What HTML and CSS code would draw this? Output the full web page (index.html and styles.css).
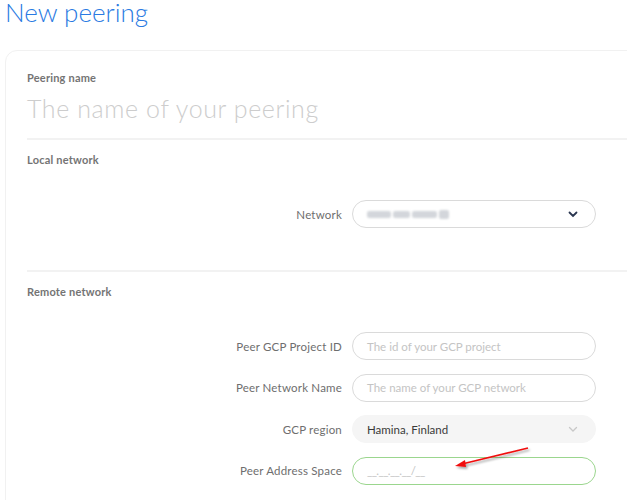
FILE: index.html
```html
<!DOCTYPE html>
<html>
<head>
<meta charset="utf-8">
<link rel="stylesheet" href="styles.css">
</head>
<body>
<h1 class="title">New peering</h1>
<div class="card">
  <section class="block block-name">
    <div class="section-label">Peering name</div>
    <div class="big-input">The name of your peering</div>
  </section>
  <div class="sep"></div>
  <section class="block block-local">
    <div class="section-label">Local network</div>
    <div class="row row-network">
      <label class="row-label">Network</label>
      <div class="field select">
        <span class="blurred"><i></i><i></i><i></i><i></i></span>
        <svg class="chev dark" width="10" height="7" viewBox="0 0 10 7"><path d="M1.5 1.5 L5 5 L8.5 1.5" fill="none" stroke="#2a3650" stroke-width="1.8" stroke-linecap="round"/></svg>
      </div>
    </div>
  </section>
  <div class="sep"></div>
  <section class="block block-remote">
    <div class="section-label">Remote network</div>
    <div class="rows">
      <div class="row">
        <label class="row-label">Peer GCP Project ID</label>
        <div class="field"><span class="ph">The id of your GCP project</span></div>
      </div>
      <div class="row">
        <label class="row-label">Peer Network Name</label>
        <div class="field"><span class="ph">The name of your GCP network</span></div>
      </div>
      <div class="row">
        <label class="row-label">GCP region</label>
        <div class="field filled">
          <span class="val">Hamina, Finland</span>
          <svg class="chev" width="10" height="7" viewBox="0 0 10 7"><path d="M1.5 1.5 L5 5 L8.5 1.5" fill="none" stroke="#c8c8c8" stroke-width="1.3" stroke-linecap="round"/></svg>
        </div>
      </div>
      <div class="row">
        <label class="row-label">Peer Address Space</label>
        <div class="field focus"><span class="ph mask">__.__.__.__/__</span></div>
      </div>
    </div>
  </section>
</div>
<svg class="arrow" width="90" height="40" viewBox="0 0 90 40">
  <defs>
    <filter id="sh" x="-20%" y="-50%" width="140%" height="200%">
      <feDropShadow dx="1.5" dy="2" stdDeviation="1" flood-color="#000" flood-opacity="0.35"/>
    </filter>
  </defs>
  <g filter="url(#sh)">
    <path d="M78 5 L12 21" stroke="#f01010" stroke-width="1.6" fill="none"/>
    <path d="M5 23 L15 17 L16 24 Z" fill="#f01010"/>
  </g>
</svg>
</body>
</html>
```
FILE: styles.css
```css
html, body {
  margin: 0;
  padding: 0;
  background: #ffffff;
  overflow: hidden;
}
body {
  width: 627px;
  height: 500px;
  position: relative;
  font-family: Lato, "Noto Sans", sans-serif;
}
.title {
  margin: 0;
  padding-left: 5px;
  height: 50px;
  font-family: Lato, sans-serif;
  font-weight: 300;
  font-size: 26px;
  line-height: 24px;
  color: #2a7ae2;
}
.card {
  margin-left: 5px;
  width: 680px;
  height: 520px;
  border: 1px solid #f1f1f1;
  border-radius: 12px;
  padding-left: 21px;
  box-sizing: border-box;
}
.section-label {
  font-size: 11px;
  font-weight: 700;
  color: #747474;
  line-height: 14px;
  letter-spacing: 0.2px;
}
.block-name {
  padding-top: 20px;
  height: 87px;
  box-sizing: border-box;
}
.big-input {
  margin-top: 7px;
  font-size: 25px;
  font-weight: 300;
  line-height: 32px;
  color: #cdcdcd;
  letter-spacing: 0.6px;
}
.sep {
  height: 2px;
  background: #f2f2f2;
}
.block-local {
  padding-top: 13px;
  height: 130px;
  box-sizing: border-box;
}
.row {
  display: flex;
  align-items: center;
  gap: 10px;
}
.row-network {
  margin-top: 33px;
}
.row-label {
  width: 315px;
  text-align: right;
  font-size: 11.5px;
  color: #6e6e6e;
  letter-spacing: 0.2px;
}
.field {
  width: 244px;
  height: 28px;
  box-sizing: border-box;
  border: 1px solid #dadada;
  border-radius: 14px;
  display: flex;
  align-items: center;
  justify-content: space-between;
  padding: 0 14px 0 14px;
  font-size: 11.5px;
}
.ph {
  color: #c4c4c4;
}
.mask {
  letter-spacing: -0.6px;
}
.val {
  color: #3a3a3a;
}
.filled {
  background: #f5f5f5;
  border-color: #f5f5f5;
}
.focus {
  border-color: #9bd68e;
}
.blurred {
  display: flex;
  gap: 2px;
  align-items: center;
  opacity: 0.55;
}
.blurred i {
  display: block;
  height: 7px;
  background: #b0b5be;
  border-radius: 2px;
  filter: blur(1.2px);
}
.blurred i:nth-child(1) { width: 24px; }
.blurred i:nth-child(2) { width: 17px; }
.blurred i:nth-child(3) { width: 25px; }
.blurred i:nth-child(4) { width: 10px; height: 9px; }
.chev {
  margin-right: 3px;
}
.block-remote {
  padding-top: 13px;
}
.rows {
  margin-top: 33px;
  display: flex;
  flex-direction: column;
  gap: 13.5px;
}
.arrow {
  position: absolute;
  left: 450px;
  top: 443px;
}
```
